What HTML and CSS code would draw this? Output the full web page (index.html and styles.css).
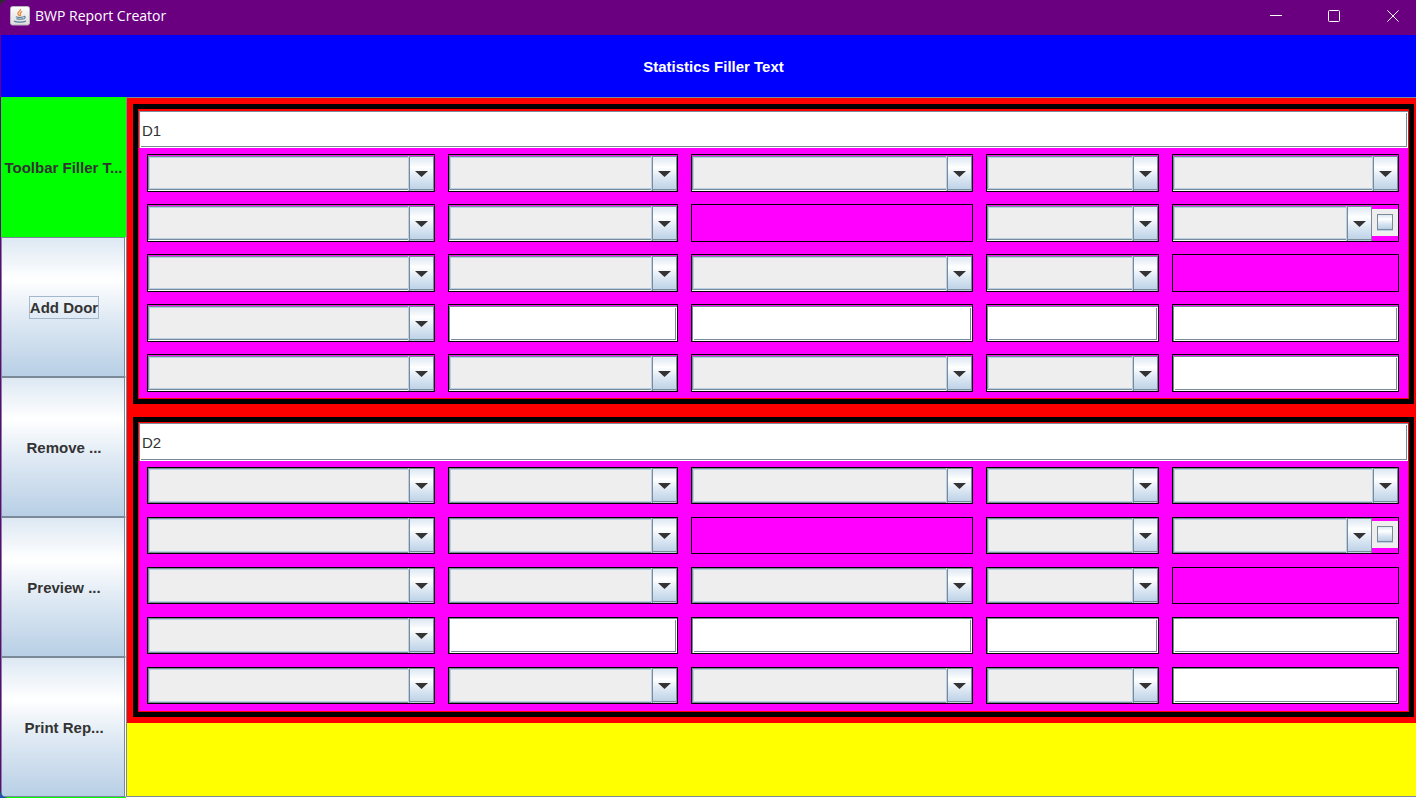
FILE: index.html
```
<!DOCTYPE html>
<html lang="en">
<head>
<meta charset="utf-8">
<title>BWP Report Creator</title>
<link rel="stylesheet" href="styles.css">
</head>
<body>
<div class="window">
  <header class="titlebar">
    <svg class="app-icon" viewBox="0 0 20 20" aria-hidden="true">
      <defs>
        <linearGradient id="tile" x1="0" y1="0" x2="0" y2="1">
          <stop offset="0" stop-color="#fdfdfd"/><stop offset="1" stop-color="#dcdcdc"/>
        </linearGradient>
      </defs>
      <rect x="0.5" y="0.5" width="19" height="18.500" rx="2" fill="url(#tile)" stroke="#b9b4bd"/>
      <path d="M10.500 3c.6 2-3 2.800-2.600 4.600.2 1 1.200 1.600 1.500 2.600M12.300 5.500c-1.600.8-2.500 1.500-2 2.500.4.800.5 1.300-.2 2" fill="none" stroke="#e8873a" stroke-width="1.300"/>
      <path d="M5.800 10.800c2 .8 5.500.8 7.700 0M6.500 12.600c2 .8 4.500.8 6.500 0M13.600 10.500c2-.5 2.200 1.600-.3 2.600M4 15c2 1.500 9.500 1.500 12 0" fill="none" stroke="#5b7f9c" stroke-width="1.200"/>
    </svg>
    <span class="titlebar-text">BWP Report Creator</span>
    <div class="controls">
      <button class="control" aria-label="Minimize"><svg viewBox="0 0 12 12"><path d="M0 5.500h12"/></svg></button>
      <button class="control" aria-label="Maximize"><svg viewBox="0 0 12 12"><rect x="0.5" y="0.5" width="11" height="11" rx="1"/></svg></button>
      <button class="control control-close" aria-label="Close"><svg viewBox="0 0 12 12"><path d="M0.400 0.400l11.200 11.200M11.600 0.400l-11.200 11.200"/></svg></button>
    </div>
  </header>
  <div class="statistics">Statistics Filler Text</div>
  <div class="body">
    <nav class="toolbar">
      <div class="toolbar-label">Toolbar Filler T...</div>
      <button class="tool"><span class="tool-text tool-text-focused">Add Door</span></button>
      <button class="tool"><span class="tool-text">Remove ...</span></button>
      <button class="tool"><span class="tool-text">Preview ...</span></button>
      <button class="tool"><span class="tool-text">Print Rep...</span></button>
    </nav>
    <main class="doors" id="doors"></main>
  </div>
</div>
<script src="doors.js"></script>
</body>
</html>
```
FILE: styles.css
```
* {
  box-sizing: border-box;
}

:root {
  --line: #7a8a99;
  --soft: #b8cfe5;
  --panel: #eeeeee;
  --metal: linear-gradient(#dde8f3, #ffffff 30%, #dde8f3 60%, #b8cfe5);
}

body {
  margin: 0;
  background: linear-gradient(#2b2b2b 50%, #1d55b5 50%);
  color: #333333;
  font: 15px/20px "Liberation Sans", Arial, sans-serif;
}

button,
input,
select {
  margin: 0;
  color: inherit;
  font: inherit;
}

.window {
  display: flex;
  flex-direction: column;
  min-height: 100vh;
  padding-left: 1px;
  border-radius: 8px 0 0 8px;
  background: #6a0080;
}

.titlebar {
  display: flex;
  align-items: center;
  height: 35px;
  padding: 0 0 4px 9px;
  color: #ffffff;
}

.app-icon {
  width: 20px;
  height: 20px;
}

.titlebar-text {
  flex: 1;
  padding: 1px 0 0 5px;
  font: 14px/20px "Open Sans", "Noto Sans", sans-serif;
}

.controls {
  display: flex;
  margin-right: -6px;
}

.control {
  display: flex;
  align-items: center;
  justify-content: center;
  width: 58px;
  height: 31px;
  padding: 1px 0 0;
  border: 0;
  background: none;
}

.control-close {
  width: 59px;
}

.control svg {
  width: 12px;
  height: 12px;
  fill: none;
  stroke: #ffffff;
}

.statistics {
  display: flex;
  align-items: center;
  justify-content: center;
  height: 62px;
  padding: 2px 0 0 10px;
  background: #0000ff;
  color: #ffffff;
  font-weight: bold;
}

.body {
  display: flex;
  flex: 1;
}

.toolbar {
  display: grid;
  grid-template-rows: repeat(5, 1fr);
  flex: none;
  width: 125px;
  padding-bottom: 1px;
  border-bottom-left-radius: 7px;
  overflow: hidden;
  background: #00ff00;
  font-weight: bold;
}

.toolbar-label {
  display: flex;
  align-items: center;
  justify-content: center;
  padding-top: 2px;
  white-space: nowrap;
}

.tool {
  padding: 1px 0 0 1px;
  border: 1px solid var(--line);
  border-right: 1px solid #ffffff;
  background: var(--metal);
  box-shadow: inset -1px 0 var(--line);
}

.tool-text {
  display: inline-block;
  padding-top: 1px;
  border: 1px solid transparent;
}

.tool-text-focused {
  border-color: #a3b8cc;
}

.doors {
  flex: 1;
  min-width: 0;
  border: solid var(--line);
  border-width: 1px 0 1px 1px;
  margin-bottom: 1px;
  background: #ffff00;
  box-shadow: 0 1px #ffffff;
}

.door-list {
  display: flex;
  flex-direction: column;
  gap: 13px;
  padding: 6px 2px 6px 6px;
  background: #ff0000;
}

.door {
  padding: 2px 1px 1px;
  border: 5px solid #000000;
  background: #ff0000;
}

.door-name,
.text {
  display: block;
  width: 100%;
  padding: 0 2px;
  border: solid var(--line);
  border-width: 1px 0 0 1px;
  border-radius: 0;
  outline: 0;
  background: linear-gradient(var(--line), var(--line)) left 1px bottom 1px / calc(100% - 2px) 1px no-repeat,
    linear-gradient(var(--line), var(--line)) right 1px bottom 2px / 1px calc(100% - 3px) no-repeat,
    #ffffff;
}

.door-name {
  height: 37px;
  padding-top: 1px;
}

.door-grid {
  --row: 38px;
  display: grid;
  grid-template-columns: 288fr 230fr 282fr 173fr 227fr;
  grid-auto-rows: var(--row);
  gap: calc(50px - var(--row)) 13px;
  padding: 6px 9px calc(44px - var(--row)) 8px;
  background: #ff00ff;
}

.cell {
  display: flex;
  min-width: 0;
  padding-top: 1px;
  border: 1px solid #000000;
}

.combo {
  position: relative;
  display: flex;
  flex: 1;
  min-width: 0;
  border-bottom: 1px solid #ffffff;
}

.combo select {
  width: 100%;
  padding: 0;
  border: 1px solid var(--line);
  border-radius: 0;
  outline: 0;
  appearance: none;
  background: var(--panel);
  box-shadow: inset 0 0 0 1px var(--soft);
}

.combo-arrow {
  position: absolute;
  inset: 0 0 -1px auto;
  display: flex;
  align-items: center;
  justify-content: center;
  width: 25px;
  border: 1px solid var(--line);
  border-width: 1px 1px 0;
  box-shadow: -1px 0 var(--soft);
  background: linear-gradient(var(--line), var(--line)) 0 calc(100% - 1px) / 100% 1px no-repeat, var(--metal);
  pointer-events: none;
}

.combo-arrow::before {
  content: "";
  width: 13px;
  height: 6px;
  background: #333333;
  clip-path: polygon(0 0, 100% 0, 50% 100%);
}

.check {
  display: flex;
  align-self: flex-start;
  align-items: center;
  justify-content: center;
  width: 26px;
  height: 27px;
  margin-top: 3px;
  padding-bottom: 1px;
  background: var(--panel);
}

.check input {
  width: 16px;
  height: 16px;
  margin: 0;
  border: 1px solid var(--line);
  appearance: none;
  background: var(--metal);
  box-shadow: 0 1px var(--soft);
}

.door-short {
  padding-top: 1px;
}

.door-short .door-name {
  height: 38px;
  padding-top: 0;
}

.door-short .door-grid {
  --row: 37px;
}

.door-short .cell {
  padding-top: 0;
}

.door-short .combo {
  border-bottom: 0;
}

.door-short .combo-arrow {
  bottom: 0;
}
```
FILE: doors.js
```
// C = combo box, T = text field, K = combo box with a check box, "-" = empty
const layout = ["CCCCC", "CC-CK", "CCCC-", "CTTTT", "CCCCT"];

function combo(label) {
  return `<div class="combo"><select aria-label="${label}"></select><span class="combo-arrow"></span></div>`;
}

function cell(kind, label) {
  let content = "";
  if (kind === "C" || kind === "K") content += combo(label);
  if (kind === "K") content += `<label class="check"><input type="checkbox" aria-label="${label} option"></label>`;
  if (kind === "T") content += `<input class="text" type="text" aria-label="${label}">`;
  return `<div class="cell">${content}</div>`;
}

function door(name, modifier) {
  const cells = layout.map((row, r) =>
    [...row].map((kind, c) => cell(kind, `${name} row ${r + 1} column ${c + 1}`)).join("")
  ).join("");
  return `<section class="door ${modifier}">
    <input class="door-name" type="text" value="${name}" aria-label="Door name">
    <div class="door-grid">${cells}</div>
  </section>`;
}

document.getElementById("doors").innerHTML =
  `<div class="door-list">${door("D1", "")}${door("D2", "door-short")}</div>`;
```
